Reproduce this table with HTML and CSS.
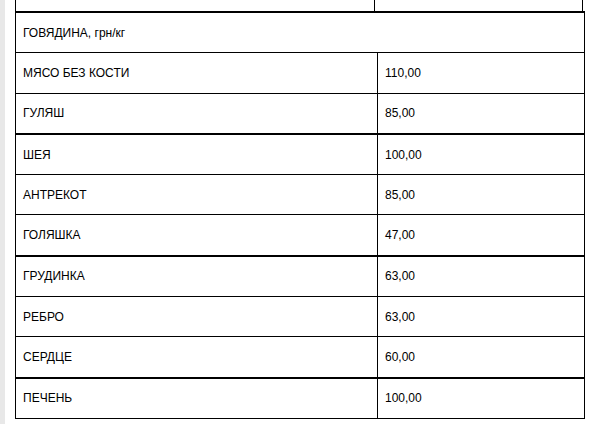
FILE: index.html
```html
<!DOCTYPE html>
<html>
<head>
<meta charset="utf-8">
<link rel="stylesheet" href="styles.css">
</head>
<body>
<div class="page">
  <div class="strip"></div>
  <div class="content">
    <div class="stub">
      <div class="stub-left"></div>
      <div class="stub-right"></div>
    </div>
    <table class="prices">
      <colgroup><col class="c-name"><col class="c-val"></colgroup>
      <tr><td class="head" colspan="2">ГОВЯДИНА, грн/кг</td></tr>
      <tr><td>МЯСО БЕЗ КОСТИ</td><td class="val">110,00</td></tr>
      <tr><td>ГУЛЯШ</td><td class="val">85,00</td></tr>
      <tr class="thick"><td>ШЕЯ</td><td class="val">100,00</td></tr>
      <tr><td>АНТРЕКОТ</td><td class="val">85,00</td></tr>
      <tr><td>ГОЛЯШКА</td><td class="val">47,00</td></tr>
      <tr class="thick"><td>ГРУДИНКА</td><td class="val">63,00</td></tr>
      <tr><td>РЕБРО</td><td class="val">63,00</td></tr>
      <tr><td>СЕРДЦЕ</td><td class="val">60,00</td></tr>
      <tr class="thick"><td>ПЕЧЕНЬ</td><td class="val">100,00</td></tr>
    </table>
  </div>
</div>
</body>
</html>
```
FILE: styles.css
```css
html, body {
  margin: 0;
  padding: 0;
  background: #fff;
}
body {
  font-family: "Liberation Sans", Arial, sans-serif;
  font-size: 12px;
  color: #000;
}
.page {
  display: flex;
  height: 424px;
  overflow: hidden;
}
.strip {
  width: 5px;
  background: #e8e8e8;
  flex: none;
}
.content {
  margin-left: 10px;
  width: 569px;
}
.stub {
  display: flex;
  height: 11px;
  width: 568px;
}
.stub-left {
  width: 358px;
  border-left: 1px solid #000;
  border-right: 1px solid #000;
}
.stub-right {
  flex: 1;
  border-right: 1px solid #000;
}
.prices {
  border-collapse: collapse;
  width: 569px;
  table-layout: fixed;
}
.c-name {
  width: 362px;
}
.c-val {
  width: 207px;
}
.prices td {
  border: 1px solid #000;
  height: 39.3px;
  padding: 0 0 0 7px;
  vertical-align: middle;
  line-height: 14px;
}
.prices tr:first-child td {
  border-top-width: 2px;
}
.prices tr.thick td {
  border-top-width: 2px;
}
.prices .val {
  padding-left: 7px;
}
```
